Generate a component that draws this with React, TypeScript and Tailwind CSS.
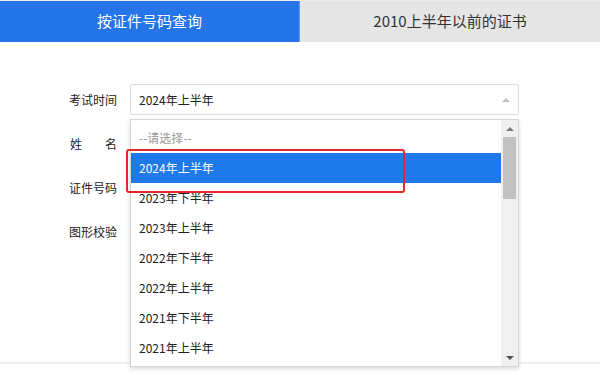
import React from 'react';

const font = { fontFamily: '"Noto Sans CJK SC", "Noto Sans", sans-serif' };

const options = [
  '2024年上半年',
  '2023年下半年',
  '2023年上半年',
  '2022年下半年',
  '2022年上半年',
  '2021年下半年',
  '2021年上半年',
];

const Triangle: React.FC<{ up?: boolean; color: string }> = ({ up, color }) => (
  <svg width="8" height="4" viewBox="0 0 8 4">
    <polygon points={up ? '0,4 8,4 4,0' : '0,0 8,0 4,4'} fill={color} />
  </svg>
);

const labels = ['考试时间', '姓名', '证件号码', '图形校验'];

const App: React.FC = () => {
  return (
    <div className="relative w-[600px] h-[375px] overflow-hidden bg-white text-[#333]" style={font}>
      {/* Tabs */}
      <div className="flex h-[42px] border-t border-[#ebebeb]">
        <div className="w-[300px] bg-[#2575e8] border-r border-[#5b9af0] flex items-center justify-center text-white text-[15px]">
          按证件号码查询
        </div>
        <div className="flex-1 bg-[#e5e5e5] flex items-center justify-center text-[15px] text-[#333]">
          2010上半年以前的证书
        </div>
      </div>

      {/* Form */}
      <div className="pt-[42px] flex flex-col gap-[13px]">
        {labels.map((label, i) => (
          <div key={label} className="flex items-center h-[31px]">
            <div className="w-[117px] flex justify-end text-[12px] text-[#222]">
              {label === '姓名' ? (
                <span className="w-[47px] flex justify-between">
                  <span>姓</span>
                  <span>名</span>
                </span>
              ) : (
                <span>{label}</span>
              )}
            </div>
            <div className="ml-[13px] w-[389px] h-[31px] border border-[#dcdcdc] rounded-[2px] flex items-center justify-between pl-[8px] pr-[8px] text-[12px] text-[#222]">
              <span>{i === 0 ? '2024年上半年' : ''}</span>
              {i === 0 && <Triangle up color="#bdbdbd" />}
            </div>
          </div>
        ))}
      </div>

      {/* Bottom rule */}
      <div className="absolute left-0 right-0 top-[362px] h-[2px] bg-[#eeeeee]" />

      {/* Dropdown list */}
      <div className="absolute left-[130px] top-[119px] w-[389px] h-[248px] bg-white border border-[#d6d6d6] shadow-[0_2px_4px_rgba(0,0,0,0.15)] flex overflow-hidden">
        <div className="flex-1 pt-[3px] text-[12px] overflow-hidden">
          <div className="h-[30px] flex items-center pl-[8px] text-[#999]">--请选择--</div>
          {options.map((o, i) => (
            <div
              key={o}
              className={`h-[30px] flex items-center pl-[8px] ${i === 0 ? 'bg-[#1e79e9] text-white' : 'text-[#222]'}`}
            >
              {o}
            </div>
          ))}
        </div>
        <div className="w-[17px] bg-[#f0f0f0] flex flex-col">
          <div className="h-[17px] flex items-center justify-center">
            <Triangle up color="#7a7a7a" />
          </div>
          <div className="mx-[2px] h-[62px] bg-[#c1c1c1]" />
          <div className="flex-1" />
          <div className="h-[17px] flex items-center justify-center">
            <Triangle color="#505050" />
          </div>
        </div>
      </div>

      {/* Highlight frame */}
      <div className="absolute left-[126px] top-[149px] w-[279px] h-[44px] border-2 border-[#e5262a] rounded-[3px]" />
    </div>
  );
};

export default App;
